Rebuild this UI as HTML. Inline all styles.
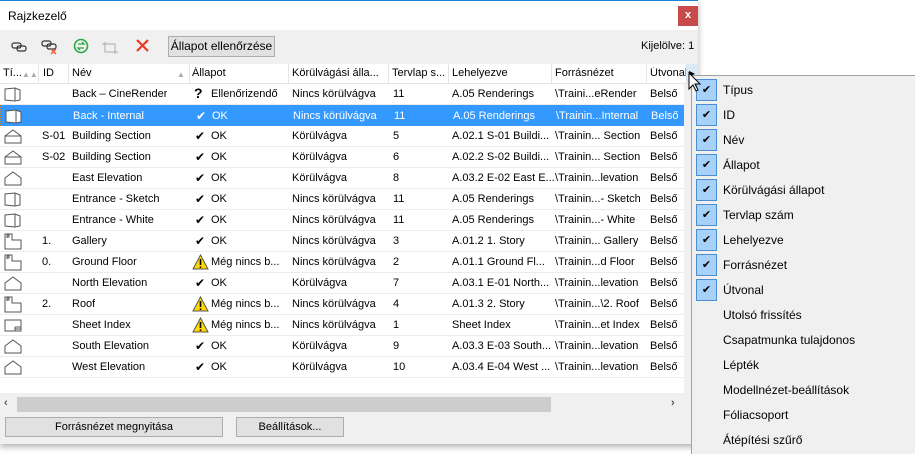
<!DOCTYPE html>
<html><head><meta charset="utf-8"><style>
*{box-sizing:border-box;margin:0;padding:0}
body{width:915px;height:454px;background:#fff;font-family:"Liberation Sans",sans-serif;font-size:11px;color:#000;position:relative;overflow:hidden}
.a{position:absolute}
.win{left:0;top:0;width:698px;height:444px;background:#f0f0f0;border-top:1px solid #1883d7;box-shadow:0 3px 6px rgba(0,0,0,.3)}
.title{left:0;top:1px;width:698px;height:29px;background:#fff}
.hdr{top:64px;height:20px;background:#fff;border-bottom:1px solid #e5e5e5}
.hc{position:absolute;top:3px;white-space:nowrap;overflow:hidden}
.sep{position:absolute;top:0;width:1px;height:20px;background:#e5e5e5}
.tbl{left:0;top:64px;width:684px;height:329px;background:#fff}
.row{position:absolute;left:0;width:684px;height:21px;border-bottom:1px solid #ececec}
.row span{position:absolute;top:4px;white-space:nowrap;overflow:hidden}
.sel{background:#3399ff;color:#fff;border:1px dotted #c87a30}
.ic{position:absolute;left:3px;top:2px}
.menu{left:691px;top:75px;width:224px;height:379px;background:#f0f0f0;border-left:1px solid #a0a0a0;border-top:1px solid #a0a0a0}
.mi{position:absolute;left:31px;font-size:12px;white-space:nowrap}
.cb{position:absolute;left:4px;width:21px;height:22px;background:#a7d1f9;border:1px solid #4a8ed4;text-align:center;line-height:20px;font-size:11px;color:#000}
.btn{background:#e1e1e1;border:1px solid #adadad;text-align:center;line-height:18px;font-size:11px}
.ck{font-size:12px}
</style></head><body>
<div class="a win"></div>
<div class="a title"></div>
<div class="a" style="left:8px;top:9px;font-size:12px">Rajzkezelő</div>
<div class="a" style="left:678px;top:6px;width:20px;height:20px;background:#c84a4a;color:#fff;text-align:center;line-height:19px;font-size:11px;font-weight:bold">x</div>
<svg class="a" style="left:10px;top:38px" width="150" height="18">
<g fill="none" stroke="#333" stroke-width="1.2"><rect x="2" y="5" width="9" height="5" rx="2"/><rect x="7" y="8" width="9" height="5" rx="2"/>
<rect x="32" y="3" width="9" height="5" rx="2"/><rect x="37" y="6" width="9" height="5" rx="2"/></g>
<path d="M41 11l5 5M46 11l-5 5" stroke="#e53" stroke-width="1.3"/>
<circle cx="71" cy="8" r="6.5" fill="none" stroke="#2ca84a" stroke-width="1.6"/><path d="M68 6h6l-2-2M74 10h-6l2 2" fill="none" stroke="#2ca84a" stroke-width="1.3"/>
<path d="M95 4v10h13M92 6h13v10" fill="none" stroke="#aaa" stroke-width="1"/>
<path d="M127 2l11 11M138 2l-11 11" stroke="#ec3a1e" stroke-width="2.2"/>
</svg>
<div class="a btn" style="left:168px;top:36px;width:107px;height:21px;line-height:19px;font-size:12px">Állapot ellenőrzése</div>
<div class="a" style="left:641px;top:40px">Kijelölve: 1</div>
<div class="a tbl"></div>
<div class="a hdr" style="left:0;width:698px">
<span class="hc" style="left:3px">Tí...</span><span class="hc" style="left:22px;color:#aaa;font-size:8px;top:6px">▲▲</span><div class="sep" style="left:38px"></div>
<span class="hc" style="left:43px">ID</span><div class="sep" style="left:68px"></div>
<span class="hc" style="left:72px">Név</span><span class="hc" style="left:177px;color:#aaa;font-size:8px;top:6px">▲</span><div class="sep" style="left:189px"></div>
<span class="hc" style="left:192px">Állapot</span><div class="sep" style="left:288px"></div>
<span class="hc" style="left:292px;width:94px">Körülvágási álla...</span><div class="sep" style="left:388px"></div>
<span class="hc" style="left:392px;width:55px">Tervlap s...</span><div class="sep" style="left:448px"></div>
<span class="hc" style="left:452px">Lehelyezve</span><div class="sep" style="left:551px"></div>
<span class="hc" style="left:555px">Forrásnézet</span><div class="sep" style="left:646px"></div>
<span class="hc" style="left:650px;width:36px">Útvonal</span>
<div class="a" style="left:686px;top:0;width:12px;height:20px;background:#dbe9f7;font-size:8px;line-height:20px;text-align:center">▶</div>
</div>
<div class="a" style="left:0;top:84px">
<div class="row" style="top:0"><svg class="ic" width="20" height="17"><path d="M2 3l10-1 5 2v10l-5 1-10-1z M12 2v13" fill="none" stroke="#555"/></svg><span style="left:72px">Back – CineRender</span><span style="left:194px;font-size:14px;top:1px;font-weight:bold">?</span><span style="left:211px">Ellenőrizendő</span><span style="left:292px">Nincs körülvágva</span><span style="left:393px">11</span><span style="left:452px">A.05 Renderings</span><span style="left:555px">\Traini...eRender</span><span style="left:650px">Belső</span></div>
<div class="row sel" style="top:21px"><svg class="ic" width="20" height="17"><path d="M2 3l10-1 5 2v10l-5 1-10-1z M12 2v13" fill="#fff" stroke="#555"/></svg><span style="left:72px">Back - Internal</span><span class="ck" style="left:195px;top:3px">✔</span><span style="left:211px">OK</span><span style="left:292px">Nincs körülvágva</span><span style="left:393px">11</span><span style="left:452px">A.05 Renderings</span><span style="left:555px">\Trainin...Internal</span><span style="left:650px">Belső</span></div>
<div class="row" style="top:42px"><svg class="ic" width="20" height="17"><path d="M2 8l8-6 8 6v7H2z M2 8h16" fill="none" stroke="#555"/></svg><span style="left:42px">S-01</span><span style="left:72px">Building Section</span><span class="ck" style="left:195px;top:3px">✔</span><span style="left:211px">OK</span><span style="left:292px">Körülvágva</span><span style="left:393px">5</span><span style="left:452px">A.02.1 S-01 Buildi...</span><span style="left:555px">\Trainin... Section</span><span style="left:650px">Belső</span></div>
<div class="row" style="top:63px"><svg class="ic" width="20" height="17"><path d="M2 8l8-6 8 6v7H2z M2 8h16" fill="none" stroke="#555"/></svg><span style="left:42px">S-02</span><span style="left:72px">Building Section</span><span class="ck" style="left:195px;top:3px">✔</span><span style="left:211px">OK</span><span style="left:292px">Körülvágva</span><span style="left:393px">6</span><span style="left:452px">A.02.2 S-02 Buildi...</span><span style="left:555px">\Trainin... Section</span><span style="left:650px">Belső</span></div>
<div class="row" style="top:84px"><svg class="ic" width="20" height="17"><path d="M2 8l8-6 8 6v7H2z" fill="none" stroke="#555"/></svg><span style="left:72px">East Elevation</span><span class="ck" style="left:195px;top:3px">✔</span><span style="left:211px">OK</span><span style="left:292px">Körülvágva</span><span style="left:393px">8</span><span style="left:452px">A.03.2 E-02 East E...</span><span style="left:555px">\Trainin...levation</span><span style="left:650px">Belső</span></div>
<div class="row" style="top:105px"><svg class="ic" width="20" height="17"><path d="M2 3l10-1 5 2v10l-5 1-10-1z M12 2v13" fill="none" stroke="#555"/></svg><span style="left:72px">Entrance - Sketch</span><span class="ck" style="left:195px;top:3px">✔</span><span style="left:211px">OK</span><span style="left:292px">Nincs körülvágva</span><span style="left:393px">11</span><span style="left:452px">A.05 Renderings</span><span style="left:555px">\Trainin...- Sketch</span><span style="left:650px">Belső</span></div>
<div class="row" style="top:126px"><svg class="ic" width="20" height="17"><path d="M2 3l10-1 5 2v10l-5 1-10-1z M12 2v13" fill="none" stroke="#555"/></svg><span style="left:72px">Entrance - White</span><span class="ck" style="left:195px;top:3px">✔</span><span style="left:211px">OK</span><span style="left:292px">Nincs körülvágva</span><span style="left:393px">11</span><span style="left:452px">A.05 Renderings</span><span style="left:555px">\Trainin...- White</span><span style="left:650px">Belső</span></div>
<div class="row" style="top:147px"><svg class="ic" width="20" height="17"><path d="M2 1h7v6h9v9H2z M4 2v3M4 2h2v2H4" fill="none" stroke="#555"/></svg><span style="left:42px">1.</span><span style="left:72px">Gallery</span><span class="ck" style="left:195px;top:3px">✔</span><span style="left:211px">OK</span><span style="left:292px">Nincs körülvágva</span><span style="left:393px">3</span><span style="left:452px">A.01.2 1. Story</span><span style="left:555px">\Trainin... Gallery</span><span style="left:650px">Belső</span></div>
<div class="row" style="top:168px"><svg class="ic" width="20" height="17"><path d="M2 1h7v6h9v9H2z M4 2v3M4 2h2v2H4" fill="none" stroke="#555"/></svg><span style="left:42px">0.</span><span style="left:72px">Ground Floor</span><svg class="a" style="left:192px;top:2px" width="17" height="16"><path d="M8.5 1L16 15H1z" fill="#ffd800" stroke="#555"/><path d="M8.5 5v6M8.5 12.5v1.5" stroke="#000" stroke-width="1.6"/></svg><span style="left:211px">Még nincs b...</span><span style="left:292px">Nincs körülvágva</span><span style="left:393px">2</span><span style="left:452px">A.01.1 Ground Fl...</span><span style="left:555px">\Trainin...d Floor</span><span style="left:650px">Belső</span></div>
<div class="row" style="top:189px"><svg class="ic" width="20" height="17"><path d="M2 8l8-6 8 6v7H2z" fill="none" stroke="#555"/></svg><span style="left:72px">North Elevation</span><span class="ck" style="left:195px;top:3px">✔</span><span style="left:211px">OK</span><span style="left:292px">Körülvágva</span><span style="left:393px">7</span><span style="left:452px">A.03.1 E-01 North...</span><span style="left:555px">\Trainin...levation</span><span style="left:650px">Belső</span></div>
<div class="row" style="top:210px"><svg class="ic" width="20" height="17"><path d="M2 1h7v6h9v9H2z M4 2v3M4 2h2v2H4" fill="none" stroke="#555"/></svg><span style="left:42px">2.</span><span style="left:72px">Roof</span><svg class="a" style="left:192px;top:2px" width="17" height="16"><path d="M8.5 1L16 15H1z" fill="#ffd800" stroke="#555"/><path d="M8.5 5v6M8.5 12.5v1.5" stroke="#000" stroke-width="1.6"/></svg><span style="left:211px">Még nincs b...</span><span style="left:292px">Nincs körülvágva</span><span style="left:393px">4</span><span style="left:452px">A.01.3 2. Story</span><span style="left:555px">\Trainin...\2. Roof</span><span style="left:650px">Belső</span></div>
<div class="row" style="top:231px"><svg class="ic" width="20" height="17"><path d="M2 3h16v11H2z M12 10h6M12 10v4M12 12h6" fill="none" stroke="#555"/></svg><span style="left:72px">Sheet Index</span><svg class="a" style="left:192px;top:2px" width="17" height="16"><path d="M8.5 1L16 15H1z" fill="#ffd800" stroke="#555"/><path d="M8.5 5v6M8.5 12.5v1.5" stroke="#000" stroke-width="1.6"/></svg><span style="left:211px">Még nincs b...</span><span style="left:292px">Nincs körülvágva</span><span style="left:393px">1</span><span style="left:452px">Sheet Index</span><span style="left:555px">\Trainin...et Index</span><span style="left:650px">Belső</span></div>
<div class="row" style="top:252px"><svg class="ic" width="20" height="17"><path d="M2 8l8-6 8 6v7H2z" fill="none" stroke="#555"/></svg><span style="left:72px">South Elevation</span><span class="ck" style="left:195px;top:3px">✔</span><span style="left:211px">OK</span><span style="left:292px">Körülvágva</span><span style="left:393px">9</span><span style="left:452px">A.03.3 E-03 South...</span><span style="left:555px">\Trainin...levation</span><span style="left:650px">Belső</span></div>
<div class="row" style="top:273px"><svg class="ic" width="20" height="17"><path d="M2 8l8-6 8 6v7H2z" fill="none" stroke="#555"/></svg><span style="left:72px">West Elevation</span><span class="ck" style="left:195px;top:3px">✔</span><span style="left:211px">OK</span><span style="left:292px">Körülvágva</span><span style="left:393px">10</span><span style="left:452px">A.03.4 E-04 West ...</span><span style="left:555px">\Trainin...levation</span><span style="left:650px">Belső</span></div>
</div>
<div class="a" style="left:0;top:397px;width:684px;height:15px;background:#f0f0f0"></div>
<div class="a" style="left:17px;top:397px;width:534px;height:15px;background:#cdcdcd"></div>
<div class="a" style="left:4px;top:397px;font-size:11px;color:#555;font-weight:bold">‹</div>
<div class="a" style="left:671px;top:397px;font-size:11px;color:#555;font-weight:bold">›</div>
<div class="a btn" style="left:5px;top:417px;width:218px;height:20px">Forrásnézet megnyitása</div>
<div class="a btn" style="left:236px;top:417px;width:108px;height:20px">Beállítások...</div>
<div class="a menu">
<div class="cb" style="top:3px">✔</div><div class="mi" style="top:7px">Típus</div>
<div class="cb" style="top:28px">✔</div><div class="mi" style="top:32px">ID</div>
<div class="cb" style="top:53px">✔</div><div class="mi" style="top:57px">Név</div>
<div class="cb" style="top:78px">✔</div><div class="mi" style="top:82px">Állapot</div>
<div class="cb" style="top:103px">✔</div><div class="mi" style="top:107px">Körülvágási állapot</div>
<div class="cb" style="top:128px">✔</div><div class="mi" style="top:132px">Tervlap szám</div>
<div class="cb" style="top:153px">✔</div><div class="mi" style="top:157px">Lehelyezve</div>
<div class="cb" style="top:178px">✔</div><div class="mi" style="top:182px">Forrásnézet</div>
<div class="cb" style="top:203px">✔</div><div class="mi" style="top:207px">Útvonal</div>
<div class="mi" style="top:232px">Utolsó frissítés</div>
<div class="mi" style="top:257px">Csapatmunka tulajdonos</div>
<div class="mi" style="top:282px">Lépték</div>
<div class="mi" style="top:307px">Modellnézet-beállítások</div>
<div class="mi" style="top:332px">Fóliacsoport</div>
<div class="mi" style="top:357px">Átépítési szűrő</div>
</div>
<svg class="a" style="left:688px;top:72px" width="14" height="22"><path d="M1 1v16l4-4 3 6 2-1-3-6h5z" fill="#fff" stroke="#000"/></svg>
</body></html>
